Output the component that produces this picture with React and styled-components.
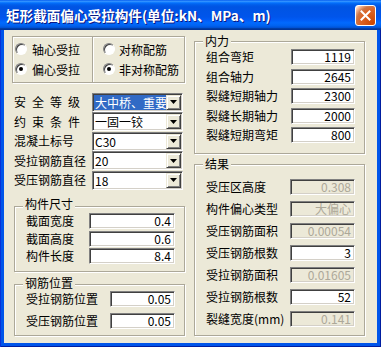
import React from "react";
import styled, { createGlobalStyle } from "styled-components";

const GlobalStyle = createGlobalStyle`
  html, body {
    margin: 0;
    padding: 0;
    background: #ffffff;
  }
  body {
    font-family: "Noto Sans CJK SC", "Liberation Sans", sans-serif;
    font-size: 12px;
    color: #000000;
  }
`;

const leftRows = [
  { label: "安全等级", value: "大中桥、重要", spacing: 6, selected: true },
  { label: "约束条件", value: "一固一铰", spacing: 6 },
  { label: "混凝土标号", value: "C30" },
  { label: "受拉钢筋直径", value: "20" },
  { label: "受压钢筋直径", value: "18" },
];

const sizeRows = [
  { label: "截面宽度", value: "0.4" },
  { label: "截面高度", value: "0.6" },
  { label: "构件长度", value: "8.4" },
];

const barRows = [
  { label: "受拉钢筋位置", value: "0.05" },
  { label: "受压钢筋位置", value: "0.05" },
];

const forceRows = [
  { label: "组合弯矩", value: "1119" },
  { label: "组合轴力", value: "2645" },
  { label: "裂缝短期轴力", value: "2300" },
  { label: "裂缝长期轴力", value: "2000" },
  { label: "裂缝短期弯矩", value: "800" },
];

const resultRows = [
  { label: "受压区高度", value: "0.308", disabled: true },
  { label: "构件偏心类型", value: "大偏心", disabled: true },
  { label: "受压钢筋面积", value: "0.00054", disabled: true },
  { label: "受压钢筋根数", value: "3" },
  { label: "受拉钢筋面积", value: "0.01605", disabled: true },
  { label: "受拉钢筋根数", value: "52" },
  { label: "裂缝宽度(mm)", value: "0.141", disabled: true },
];

export default function App() {
  return (
    <>
      <GlobalStyle />
      <Window>
        <TitleBar>
          <Title>矩形截面偏心受拉构件(单位:kN、MPa、m)</Title>
          <CloseButton>
            <svg width="11" height="11" viewBox="0 0 11 11">
              <path d="M1.5 1.5 L9.5 9.5 M9.5 1.5 L1.5 9.5" stroke="#fff" strokeWidth="2" strokeLinecap="square" />
            </svg>
          </CloseButton>
        </TitleBar>

        <Client>
          <LeftCol>
            <RadioPanel>
              <RadioCol $width="77px" $pad="2px">
                <RadioItem><RadioDot /><span>轴心受拉</span></RadioItem>
                <RadioItem><RadioDot $checked /><span>偏心受拉</span></RadioItem>
              </RadioCol>
              <RadioCol $divider $pad="10px">
                <RadioItem $gap="4px"><RadioDot /><span>对称配筋</span></RadioItem>
                <RadioItem $gap="4px"><RadioDot $checked /><span>非对称配筋</span></RadioItem>
              </RadioCol>
            </RadioPanel>

            <ComboList>
              {leftRows.map((r) => (
                <ComboRow key={r.label}>
                  <Label $spacing={r.spacing}>{r.label}</Label>
                  <Combo>
                    <ComboText $selected={r.selected}>{r.value}</ComboText>
                    <ComboButton>
                      <svg width="7" height="4" viewBox="0 0 7 4">
                        <polygon points="0,0 7,0 3.5,4" fill="#000" />
                      </svg>
                    </ComboButton>
                  </Combo>
                </ComboRow>
              ))}
            </ComboList>

            <Group $top="17px" $left="2px" $bottom="7px">
              <Legend $lift="9px">构件尺寸</Legend>
              <Rows $gap="1.5px" $top="3px">
                {sizeRows.map((r) => (
                  <FieldRow key={r.label}>
                    <Label>{r.label}</Label>
                    <Field $width="86px">{r.value}</Field>
                  </FieldRow>
                ))}
              </Rows>
            </Group>

            <Group $top="12px" $left="2px" $bottom="6px">
              <Legend $lift="8px">钢筋位置</Legend>
              <Rows $gap="6px" $top="2px">
                {barRows.map((r) => (
                  <FieldRow key={r.label}>
                    <Label>{r.label}</Label>
                    <Field $width="65px">{r.value}</Field>
                  </FieldRow>
                ))}
              </Rows>
            </Group>
          </LeftCol>

          <RightCol>
            <Group $top="5px" $bottom="10px">
              <Legend>内力</Legend>
              <Rows $gap="3.5px" $top="2px">
                {forceRows.map((r) => (
                  <FieldRow key={r.label}>
                    <Label>{r.label}</Label>
                    <Field $width="64px">{r.value}</Field>
                  </FieldRow>
                ))}
              </Rows>
            </Group>

            <Group $top="10px" $bottom="8px">
              <Legend>结果</Legend>
              <Rows $gap="6px" $top="9px">
                {resultRows.map((r) => (
                  <FieldRow key={r.label}>
                    <Label>{r.label}</Label>
                    <Field $width="65px" $disabled={r.disabled}>{r.value}</Field>
                  </FieldRow>
                ))}
              </Rows>
            </Group>
          </RightCol>
        </Client>
      </Window>
    </>
  );
}

const Window = styled.div`
  width: 381px;
  height: 347px;
  box-sizing: border-box;
  display: flex;
  flex-direction: column;
  background: #0055ea;
  box-shadow: inset 1px 0 0 #0831d9, inset -1px 0 0 #001ea0, inset 0 -1px 0 #001ea0;
`;

const TitleBar = styled.div`
  height: 30px;
  flex: none;
  display: flex;
  align-items: center;
  justify-content: space-between;
  padding: 0 5px 0 6px;
  box-sizing: border-box;
  background: linear-gradient(
    180deg,
    #0058ee 0%,
    #3593ff 4%,
    #288eff 6%,
    #127dff 8%,
    #036ffc 10%,
    #0262ee 14%,
    #0057e5 20%,
    #0054e3 24%,
    #0055eb 56%,
    #005bf5 66%,
    #026afe 76%,
    #0062ef 86%,
    #0052d6 92%,
    #0040ab 94%,
    #003092 100%
  );
`;

const Title = styled.div`
  color: #ffffff;
  font-weight: bold;
  font-size: 13.6px;
  line-height: 16px;
  white-space: nowrap;
  text-shadow: 1px 1px 0 #0a1883;
`;

const CloseButton = styled.div`
  width: 21px;
  height: 21px;
  box-sizing: border-box;
  border: 1px solid #ffffff;
  border-radius: 3px;
  display: flex;
  align-items: center;
  justify-content: center;
  background: radial-gradient(circle at 90% 90%, #cc4600 0%, #dc6527 55%, #cd7546 70%, #ffccb2 90%, #ffffff 100%);
`;

const Client = styled.div`
  flex: 1;
  margin: 0 4px 4px;
  background: #ece9d8;
  display: flex;
  gap: 9px;
  padding: 6px 12px 0 8px;
`;

const LeftCol = styled.div`
  width: 173px;
  display: flex;
  flex-direction: column;
`;

const RightCol = styled.div`
  width: 171px;
  display: flex;
  flex-direction: column;
`;

const RadioPanel = styled.div`
  height: 47px;
  box-sizing: border-box;
  display: flex;
  border: 1px solid #aca899;
  box-shadow: inset 1px 1px 0 #ffffff, 1px 1px 0 #ffffff;
`;

const RadioCol = styled.div`
  width: ${(p) => p.$width || "auto"};
  flex: ${(p) => (p.$width ? "none" : "1")};
  display: flex;
  flex-direction: column;
  padding: 2px 0 0 ${(p) => p.$pad};
  border-left: ${(p) => (p.$divider ? "1px solid #aca899" : "none")};
  box-shadow: ${(p) => (p.$divider ? "inset 1px 0 0 #ffffff" : "none")};
`;

const RadioItem = styled.div`
  height: 20px;
  display: flex;
  align-items: center;
  gap: ${(p) => p.$gap || "5px"};
  white-space: nowrap;
`;

const RadioDot = styled.div`
  width: 12px;
  height: 12px;
  box-sizing: border-box;
  border-radius: 50%;
  background: #ffffff;
  border: 1px solid;
  border-color: #808080 #ffffff #ffffff #808080;
  box-shadow: inset 1px 1px 0 #404040;
  display: flex;
  align-items: center;
  justify-content: center;

  &::after {
    content: "";
    width: 4px;
    height: 4px;
    border-radius: 50%;
    background: #000000;
    display: ${(p) => (p.$checked ? "block" : "none")};
  }
`;

const ComboList = styled.div`
  margin-top: 10px;
  display: flex;
  flex-direction: column;
  gap: 1.5px;
`;

const ComboRow = styled.div`
  height: 18px;
  display: flex;
  align-items: center;
  justify-content: space-between;
  padding: 0 2px;
`;

const Label = styled.span`
  white-space: nowrap;
  line-height: 14px;
  letter-spacing: ${(p) => (p.$spacing ? `${p.$spacing}px` : "0")};
`;

const Combo = styled.div`
  width: 91px;
  height: 19px;
  box-sizing: border-box;
  display: flex;
  background: #ffffff;
  border: 1px solid;
  border-color: #808080 #ffffff #ffffff #808080;
  box-shadow: inset 1px 1px 0 #404040, inset -1px -1px 0 #d4d0c8;
  padding: 1px;
`;

const ComboText = styled.div`
  flex: 1;
  overflow: hidden;
  white-space: nowrap;
  line-height: 15px;
  padding-left: 1px;
  background: ${(p) => (p.$selected ? "#316ac5" : "transparent")};
  color: ${(p) => (p.$selected ? "#ffffff" : "#000000")};
`;

const ComboButton = styled.div`
  width: 15px;
  flex: none;
  box-sizing: border-box;
  background: #ece9d8;
  border: 1px solid;
  border-color: #ece9d8 #404040 #404040 #ece9d8;
  box-shadow: inset 1px 1px 0 #ffffff, inset -1px -1px 0 #808080;
  display: flex;
  align-items: center;
  justify-content: center;
`;

const Group = styled.div`
  margin-top: ${(p) => p.$top};
  margin-left: ${(p) => p.$left || "0px"};
  display: flex;
  flex-direction: column;
  border: 1px solid #aca899;
  box-shadow: inset 1px 1px 0 #ffffff, 1px 1px 0 #ffffff;
  padding: 0 9px ${(p) => p.$bottom} 11px;
`;

const Legend = styled.div`
  align-self: flex-start;
  margin: -${(p) => p.$lift || "7px"} 0 0 -3px;
  padding: 0 2px;
  height: 12px;
  line-height: 12px;
  background: #ece9d8;
  white-space: nowrap;
`;

const Rows = styled.div`
  margin-top: ${(p) => p.$top};
  display: flex;
  flex-direction: column;
  gap: ${(p) => p.$gap};
`;

const FieldRow = styled.div`
  height: 16px;
  display: flex;
  align-items: center;
  justify-content: space-between;
`;

const Field = styled.div`
  width: ${(p) => p.$width};
  height: 16px;
  box-sizing: border-box;
  border: 1px solid;
  border-color: #808080 #ffffff #ffffff #808080;
  box-shadow: inset 1px 1px 0 #404040, inset -1px -1px 0 #d4d0c8;
  background: ${(p) => (p.$disabled ? "#ece9d8" : "#ffffff")};
  color: ${(p) => (p.$disabled ? "#aca899" : "#000000")};
  text-align: right;
  padding-right: 3px;
  line-height: 14px;
  white-space: nowrap;
  overflow: hidden;
`;
